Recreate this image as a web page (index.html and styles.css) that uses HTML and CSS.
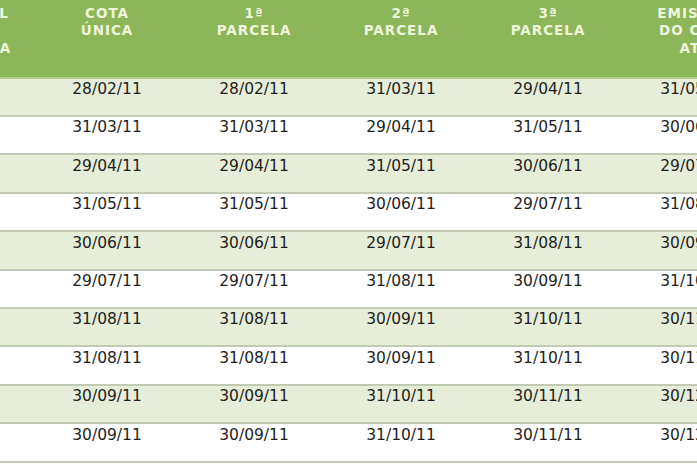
FILE: index.html
```html
<!DOCTYPE html>
<html lang="pt-BR">
<head>
<meta charset="utf-8">
<title>Calendário IPVA</title>
<link rel="stylesheet" href="styles.css">
</head>
<body>
<div class="viewport">
<table class="cal">
  <colgroup>
    <col class="c-final">
    <col class="c-data">
    <col class="c-data">
    <col class="c-data">
    <col class="c-data">
    <col class="c-data">
  </colgroup>
  <thead>
    <tr>
      <th>FINAL<br>DE<br>PLACA</th>
      <th>COTA<br>ÚNICA</th>
      <th>1ª<br>PARCELA</th>
      <th>2ª<br>PARCELA</th>
      <th>3ª<br>PARCELA</th>
      <th>EMISSÃO<br>DO CRLV<br>ATÉ</th>
    </tr>
  </thead>
  <tbody>
    <tr class="alt"><td>1</td><td>28/02/11</td><td>28/02/11</td><td>31/03/11</td><td>29/04/11</td><td>31/05/11</td></tr>
    <tr><td>2</td><td>31/03/11</td><td>31/03/11</td><td>29/04/11</td><td>31/05/11</td><td>30/06/11</td></tr>
    <tr class="alt"><td>3</td><td>29/04/11</td><td>29/04/11</td><td>31/05/11</td><td>30/06/11</td><td>29/07/11</td></tr>
    <tr><td>4</td><td>31/05/11</td><td>31/05/11</td><td>30/06/11</td><td>29/07/11</td><td>31/08/11</td></tr>
    <tr class="alt"><td>5</td><td>30/06/11</td><td>30/06/11</td><td>29/07/11</td><td>31/08/11</td><td>30/09/11</td></tr>
    <tr><td>6</td><td>29/07/11</td><td>29/07/11</td><td>31/08/11</td><td>30/09/11</td><td>31/10/11</td></tr>
    <tr class="alt"><td>7</td><td>31/08/11</td><td>31/08/11</td><td>30/09/11</td><td>31/10/11</td><td>30/11/11</td></tr>
    <tr><td>8</td><td>31/08/11</td><td>31/08/11</td><td>30/09/11</td><td>31/10/11</td><td>30/11/11</td></tr>
    <tr class="alt"><td>9</td><td>30/09/11</td><td>30/09/11</td><td>31/10/11</td><td>30/11/11</td><td>30/12/11</td></tr>
    <tr><td>0</td><td>30/09/11</td><td>30/09/11</td><td>31/10/11</td><td>30/11/11</td><td>30/12/11</td></tr>
  </tbody>
</table>
</div>
</body>
</html>
```
FILE: styles.css
```css
html, body {
  margin: 0;
  padding: 0;
  background: #ffffff;
}
.viewport {
  width: 697px;
  height: 465px;
  overflow: hidden;
}
.cal {
  margin-left: -65.5px;
  border-collapse: collapse;
  table-layout: fixed;
  width: 834px;
}
.c-final { width: 99px; }
.c-data { width: 147px; }
.cal thead tr {
  background: #8db65a;
  height: 77.6px;
  border-bottom: 2px solid #b3cf89;
}
.cal th {
  box-sizing: border-box;
  vertical-align: top;
  padding: 4.5px 0 0 0;
  font-family: "DejaVu Sans", Verdana, sans-serif;
  font-weight: bold;
  font-size: 13.5px;
  line-height: 17.5px;
  letter-spacing: 1px;
  color: #eef5dc;
  text-align: center;
}
.cal tbody tr {
  height: 38.4px;
  border-bottom: 2px solid #c1cab2;
}
.cal tbody tr.alt {
  background: #e6edd8;
}
.cal td {
  box-sizing: border-box;
  vertical-align: top;
  padding: 1.5px 0 0 0;
  font-family: "DejaVu Sans", Verdana, sans-serif;
  font-size: 15.5px;
  line-height: 18px;
  color: #1e1e1e;
  text-align: center;
}
```
